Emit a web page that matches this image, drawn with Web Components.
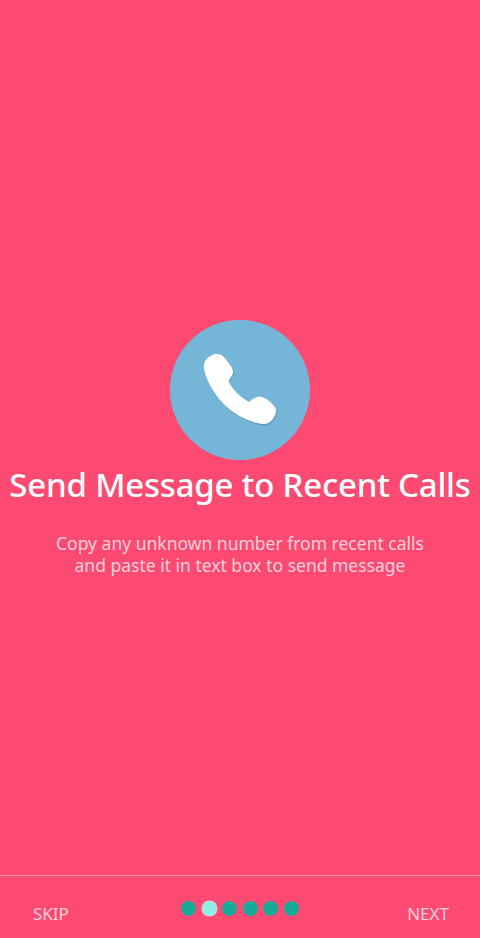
<!DOCTYPE html>
<html><head><meta charset="utf-8">
<style>
html,body{margin:0;height:100%;background:#fc4a72;}
</style></head><body>
<intro-screen>
  <intro-slide title-text="Send Message to Recent Calls">Copy any unknown number from recent calls<br>and paste it in text box to send message</intro-slide>
  <intro-footer slot="footer"></intro-footer>
</intro-screen>
<script>
const P="M34 44C35 39 41 34.500 46 34C50 33.500 53 35.500 55.500 39C58.500 43 62.500 47 63 51.500C63.500 55 60 58 58.500 61C62 69 70 77 79 82C82.500 79.500 85.500 76.500 90 76.500C95 77 101 82 105 87C107 90 106 94 104 97C102 101 98.500 104 94 104C80 103 62 94 50 80C41 69 33 54 34 44Z";
class IntroScreen extends HTMLElement{constructor(){super();this.attachShadow({mode:'open'}).innerHTML=`<style>
:host{display:flex;flex-direction:column;width:480px;height:938px;background:#fc4a72;font-family:"Noto Sans","Open Sans",sans-serif;overflow:hidden}
.main{flex:1;min-height:0}
</style><div class="main"><slot></slot></div><slot name="footer"></slot>`}}
class CallIcon extends HTMLElement{constructor(){super();this.attachShadow({mode:'open'}).innerHTML=`<style>
:host{display:block;width:140px;height:140px;border-radius:50%;background:#75b5d8}
svg{display:block}
</style><svg width="140" height="140" viewBox="0 0 140 140">
<path d="${P}" fill="#4d7f9c" opacity=".45" transform="translate(.8 1.600)"/>
<path d="${P}" fill="#fff"/>
</svg>`}}
class IntroSlide extends HTMLElement{constructor(){super();const t=this.getAttribute('title-text')||'';this.attachShadow({mode:'open'}).innerHTML=`<style>
:host{display:flex;flex-direction:column;align-items:center;padding-top:320px;color:#fff}
h1{margin:2px 0 0;font-size:33px;line-height:46px;font-weight:500;white-space:nowrap;letter-spacing:-.2px}
p{margin:24px 0 0;font-size:17.500px;line-height:22px;text-align:center;color:#fdd0da;white-space:nowrap}
</style><call-icon></call-icon><h1></h1><p><slot></slot></p>`;this.shadowRoot.querySelector('h1').textContent=t}}
class PageDots extends HTMLElement{constructor(){super();this.attachShadow({mode:'open'}).innerHTML=`<style>
:host{display:flex;gap:5.500px;align-items:center}
i{display:block;width:15px;height:15px;border-radius:50%;background:#16ab98}
i.on{background:#8aeee3;box-shadow:0 0 0 .5px #fdd0da}
</style><i></i><i class="on"></i><i></i><i></i><i></i><i></i>`}}
class IntroFooter extends HTMLElement{constructor(){super();this.attachShadow({mode:'open'}).innerHTML=`<style>
:host{display:grid;grid-template-columns:1fr auto 1fr;align-items:start;box-sizing:border-box;height:63px;border-top:1px solid #fe93aa;padding:0 31px 0 33px;color:#fdd0da;font-size:17px}
page-dots{margin-top:25px;transform:translateX(-1px)}
span{margin-top:26px;line-height:23px}
.r{text-align:right}
</style><span>SKIP</span><page-dots></page-dots><span class="r">NEXT</span>`}}
customElements.define('intro-screen',IntroScreen);
customElements.define('call-icon',CallIcon);
customElements.define('intro-slide',IntroSlide);
customElements.define('page-dots',PageDots);
customElements.define('intro-footer',IntroFooter);
</script>
</body></html>
